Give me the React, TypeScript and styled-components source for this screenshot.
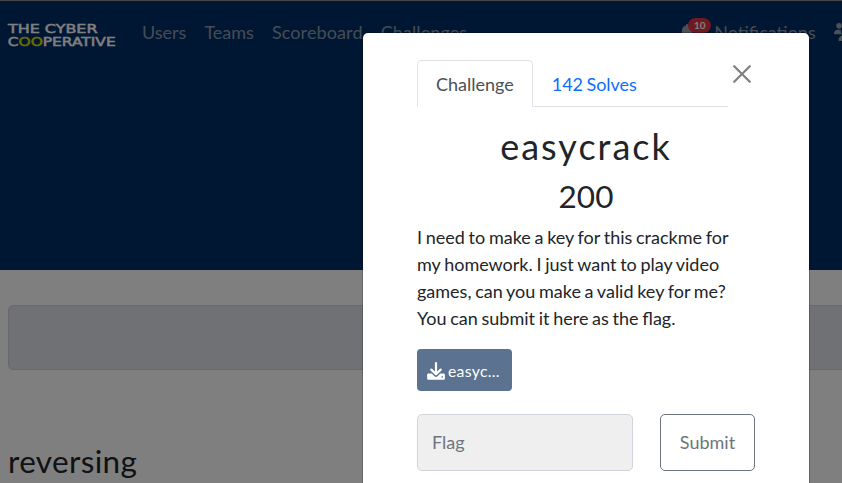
import React from "react";
import styled, { createGlobalStyle } from "styled-components";
import { FaBell, FaUsers } from "react-icons/fa6";

const GlobalStyle = createGlobalStyle`
  * { box-sizing: border-box; }
  html, body { margin: 0; height: 100%; overflow: hidden; }
  body {
    background: #fff;
    color: #212529;
    font: 18px/1.5 Lato, sans-serif;
  }
`;

const Page = styled.div`
  position: relative;
  height: 483px;
  overflow: hidden;
`;

const Hero = styled.header`
  height: 270px;
  background: #002e69;
  border-top: 1px solid #8d8d8d;
`;

const Navbar = styled.nav`
  display: flex;
  align-items: center;
  width: 980px;
  height: 62px;
  padding-left: 8px;
`;

const Logo = styled.svg`
  flex: none;
  width: 108px;
  height: 26px;
  margin-right: 26px;
  margin-top: 8px;
  overflow: visible;
`;

const NavLink = styled.a<{ $tracking?: number }>`
  margin-right: 18px;
  color: #8c98a7;
  letter-spacing: ${(p) => p.$tracking ?? 0}px;
  white-space: nowrap;
`;

const NavRight = styled.div`
  display: flex;
  align-items: center;
  margin-left: 194px;
`;

const Bell = styled.span`
  position: relative;
  display: flex;
  width: 35px;
  color: #98a3b1;
`;

const Count = styled.span`
  position: absolute;
  top: -6px;
  left: 9px;
  width: 23px;
  height: 15px;
  border-radius: 8px;
  background: #dc3545;
  color: #fff;
  font-size: 10px;
  font-weight: 700;
  line-height: 15px;
  text-align: center;
`;

const TeamIcon = styled(FaUsers)`
  flex: none;
  width: 22.5px;
  height: 18px;
  color: #98a3b1;
`;

const Board = styled.main`
  width: 960px;
  padding: 35px 8px 0;
`;

const Alert = styled.div`
  height: 65px;
  border: 1px solid #cfd3da;
  border-radius: 5px;
  background: #e0e2e8;
`;

const Category = styled.h3`
  margin: 72px 0 0;
  font-size: 31.5px;
  font-weight: 400;
  line-height: 38px;
  letter-spacing: 0.35px;
`;

const Backdrop = styled.div`
  position: absolute;
  inset: 0;
  padding: 33px 33px 0 363px;
  background: rgba(0, 0, 0, 0.5);
`;

const Dialog = styled.section`
  height: 560px;
  padding: 27px 54px;
  border-radius: 5px;
  background: #fff;
  box-shadow: 0 0 0 1px rgba(0, 0, 0, 0.2);
`;

const DialogTop = styled.div`
  display: flex;
`;

const Tabs = styled.div`
  display: flex;
  width: 311px;
  height: 47px;
  border-bottom: 1px solid #dee2e6;
`;

const Tab = styled.button<{ $active?: boolean }>`
  height: 47px;
  padding: 2px 18px 0;
  border: 1px solid;
  border-color: ${(p) => (p.$active ? "#dee2e6 #dee2e6 #fff" : "transparent")};
  border-radius: 5px 5px 0 0;
  background: ${(p) => (p.$active ? "#fff" : "transparent")};
  color: ${(p) => (p.$active ? "#495057" : "#0d6efd")};
  font: inherit;
  letter-spacing: ${(p) => (p.$active ? "0" : "-0.05px")};
  word-spacing: -1px;
  white-space: nowrap;
`;

const Close = styled.button`
  width: 18px;
  height: 18px;
  margin: 5px 0 0 5px;
  padding: 0;
  border: 0;
  background: none;
  color: #808080;
  svg { display: block; }
`;

const Title = styled.h2`
  margin: 17px 0 0;
  font-size: 36px;
  font-weight: 400;
  line-height: 44px;
  letter-spacing: 2px;
  text-align: center;
`;

const Points = styled.h3`
  margin: 9px 0;
  font-size: 31.5px;
  font-weight: 400;
  line-height: 38px;
  text-align: center;
`;

const Description = styled.p`
  width: 316px;
  margin: 0;
  word-spacing: -0.9px;
`;

const FileButton = styled.button`
  display: flex;
  align-items: center;
  gap: 3px;
  width: 95px;
  height: 42px;
  margin: 17px 0 23px;
  padding: 0 10px;
  border: 0;
  border-radius: 4px;
  background: #5b7290;
  color: #fff;
  font: 15.75px Lato, sans-serif;
  letter-spacing: 0.3px;
  svg { flex: none; width: 18px; height: 18px; margin-top: 2px; }
`;

const FlagRow = styled.div`
  display: flex;
  gap: 27px;
`;

const FlagInput = styled.input`
  width: 216px;
  height: 57px;
  padding: 0 14px 2px;
  border: 1px solid #ced4da;
  border-radius: 5px;
  background: #efefef;
  font: inherit;
  &::placeholder { color: #6c757d; opacity: 1; }
`;

const Submit = styled.button`
  width: 95px;
  height: 57px;
  padding: 0;
  border: 1px solid #6c757d;
  border-radius: 5px;
  background: #fff;
  color: #6c757d;
  font: inherit;
`;

const links = [
  { label: "Users", tracking: 0 },
  { label: "Teams", tracking: 0 },
  { label: "Scoreboard", tracking: 0.12 },
  { label: "Challenges", tracking: 0.1 },
];

function Brand() {
  return (
    <Logo viewBox="0 0 108 26" fill="#ffffff" stroke="#ffffff" strokeWidth="0.5" fontFamily="DejaVu Sans, sans-serif" fontSize="12.6">
      <text x="0" y="10.3" textLength="89.500" lengthAdjust="spacingAndGlyphs">THE CYBER</text>
      <text x="-0.3" y="23.3" textLength="108" lengthAdjust="spacingAndGlyphs">
        C<tspan fill="#d9d900" stroke="#d9d900">OO</tspan>PERATIVE
      </text>
    </Logo>
  );
}

function DownloadIcon() {
  return (
    <svg viewBox="0 0 18 18" fill="none" stroke="currentColor">
      <path d="M9 1.2v10.4M4.3 7.6 9 12.2l4.7-4.6" strokeWidth="2.2" strokeLinecap="round" strokeLinejoin="round" />
      <path
        d="M1.5 11.6h3.2l2.8 2.7c.9.8 2.1.8 3 0l2.8-2.7h3.2c.8 0 1.4.6 1.4 1.4v3.4c0 .8-.6 1.4-1.4 1.4h-15C.7 17.8.1 17.2.1 16.4V13c0-.8.6-1.4 1.4-1.4Zm13.7 2.5a.8.8 0 1 0 0 1.600.8.8 0 0 0 0-1.6Z"
        fill="currentColor"
        fillRule="evenodd"
        stroke="none"
      />
    </svg>
  );
}

export default function App() {
  return (
    <>
      <GlobalStyle />
      <Page>
        <Hero>
          <Navbar>
            <Brand />
            {links.map(({ label, tracking }) => (
              <NavLink key={label} $tracking={tracking}>
                {label}
              </NavLink>
            ))}
            <NavRight>
              <Bell>
                <FaBell size={16} />
                <Count>10</Count>
              </Bell>
              <NavLink>Notifications</NavLink>
              <TeamIcon />
            </NavRight>
          </Navbar>
        </Hero>
        <Board>
          <Alert />
          <Category>reversing</Category>
        </Board>
        <Backdrop>
          <Dialog>
            <DialogTop>
              <Tabs>
                <Tab $active>Challenge</Tab>
                <Tab>142 Solves</Tab>
              </Tabs>
              <Close aria-label="Close">
                <svg width="18" height="18" viewBox="0 0 18 18" stroke="currentColor" strokeWidth="2.2" strokeLinecap="round">
                  <path d="M1.2 1.2 16.8 16.8M16.8 1.2 1.2 16.8" />
                </svg>
              </Close>
            </DialogTop>
            <Title>easycrack</Title>
            <Points>200</Points>
            <Description>
              I need to make a key for this crackme for my homework. I just want to play video games, can you make a valid key
              for me? You can submit it here as the flag.
            </Description>
            <FileButton>
              <DownloadIcon />
              easyc...
            </FileButton>
            <FlagRow>
              <FlagInput placeholder="Flag" />
              <Submit>Submit</Submit>
            </FlagRow>
          </Dialog>
        </Backdrop>
      </Page>
    </>
  );
}
